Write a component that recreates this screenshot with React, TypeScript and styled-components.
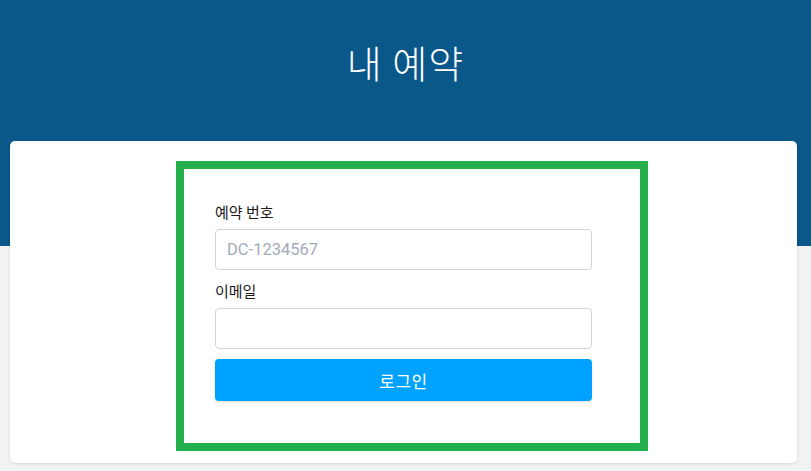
import React from "react";
import styled, { createGlobalStyle } from "styled-components";

const GlobalStyle = createGlobalStyle`
  html, body {
    margin: 0;
    padding: 0;
    background: #f1f2f4;
    font-family: Roboto, "Noto Sans CJK KR", sans-serif;
  }
  * {
    box-sizing: border-box;
  }
`;

const Page = styled.div`
  width: 811px;
  height: 471px;
  overflow: hidden;
  background: #f1f2f4;
`;

const Header = styled.header`
  height: 246px;
  background: #0a578a;
  padding-top: 35px;
  display: flex;
  justify-content: center;
`;

const Title = styled.h1`
  margin: 0;
  color: #ffffff;
  font-family: "Noto Sans CJK KR", sans-serif;
  font-weight: 300;
  font-size: 38px;
  line-height: 54px;
  letter-spacing: 1px;
`;

const Card = styled.section`
  margin: -105px 14px 0 10px;
  height: 322px;
  background: #ffffff;
  border-radius: 5px;
  box-shadow: 0 1px 3px rgba(0, 0, 0, 0.12);
  padding: 20px 0 0 166px;
`;

const Highlight = styled.div`
  width: 472px;
  height: 290px;
  border: 8px solid #23b04c;
  padding: 32px 48px 0 31px;
`;

const Form = styled.form`
  display: flex;
  flex-direction: column;
`;

const Label = styled.label`
  font-family: "Noto Sans CJK KR", sans-serif;
  font-size: 15px;
  line-height: 22px;
  color: #1a1a1a;
  margin-bottom: 6px;
`;

const Input = styled.input`
  width: 377px;
  height: 41px;
  border: 1px solid #d3d5da;
  border-radius: 4px;
  padding: 0 11px;
  font-family: Roboto, sans-serif;
  font-size: 16.5px;
  color: #333;
  margin-bottom: 10px;
  outline: none;

  &::placeholder {
    color: #a1abbc;
  }
`;

const Button = styled.button`
  width: 377px;
  height: 42px;
  margin-top: 0;
  border: none;
  border-radius: 4px;
  background: #00a2ff;
  color: #ffffff;
  font-family: "Noto Sans CJK KR", sans-serif;
  font-size: 17px;
  letter-spacing: 0.5px;
  box-shadow: 0 1px 2px rgba(0, 0, 0, 0.15);
  cursor: pointer;
`;

const App = () => {
  return (
    <Page>
      <GlobalStyle />
      <Header>
        <Title>내 예약</Title>
      </Header>
      <Card>
        <Highlight>
          <Form onSubmit={(e) => e.preventDefault()}>
            <Label>예약 번호</Label>
            <Input placeholder="DC-1234567" />
            <Label>이메일</Label>
            <Input type="email" />
            <Button type="submit">로그인</Button>
          </Form>
        </Highlight>
      </Card>
    </Page>
  );
};

export default App;
